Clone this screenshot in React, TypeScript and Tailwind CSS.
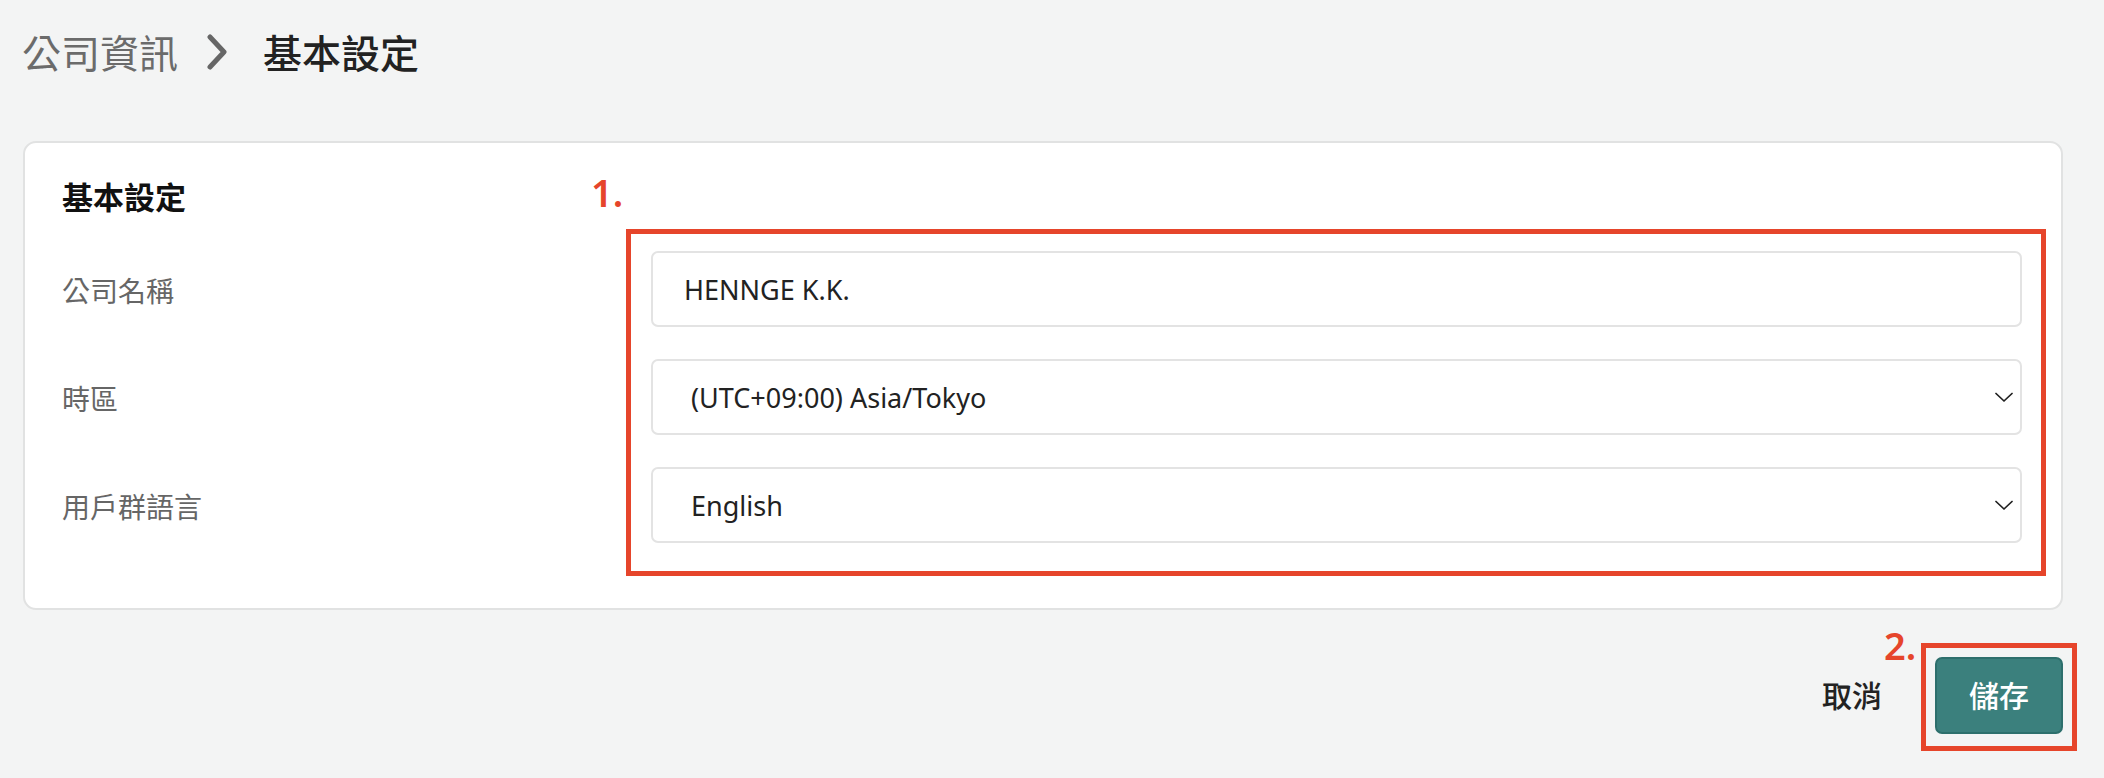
import React from "react";

function Chevron() {
  return (
    <svg width="18" height="11" viewBox="0 0 18 11" fill="none" className="shrink-0">
      <path d="M1 1.5 L9 9 L17 1.5" stroke="#1f1f1f" strokeWidth="1.7" strokeLinecap="round" strokeLinejoin="round" />
    </svg>
  );
}

function SelectBox({ value }: { value: string }) {
  return (
    <div className="h-[76px] rounded-[7px] border-2 border-[#e3e3e3] bg-white flex items-center justify-between pl-[38px] pr-[7px]">
      <span className="text-[27px] leading-none text-[#222]">{value}</span>
      <Chevron />
    </div>
  );
}

export default function App() {
  return (
    <div className="min-h-screen w-full bg-[#f3f4f4] font-[family-name:'Noto_Sans','Noto_Sans_CJK_TC',sans-serif]">
      <div className="ml-[22px] w-[2041px]">
        {/* Breadcrumb */}
        <div className="h-[104px] flex items-center">
          <span className="text-[39px] leading-none text-[#6b6b6b]">公司資訊</span>
          <svg width="22" height="36" viewBox="0 0 22 36" fill="none" className="ml-[28px]">
            <path d="M4 3 L18 18 L4 33" stroke="#666" strokeWidth="5" strokeLinecap="round" strokeLinejoin="round" />
          </svg>
          <span className="ml-[35px] text-[39px] leading-none font-medium text-[#222]">基本設定</span>
        </div>

        {/* Card */}
        <div className="mt-[37px] ml-[1px] w-[2040px] rounded-[13px] border-2 border-[#e1e2e2] bg-white pl-[37px] pr-[15px] pt-[34px] pb-[32px]">
          <div className="h-[40px] flex items-center text-[31px] leading-none font-bold text-[#111]">基本設定</div>
          <div className="mt-[12px] flex">
            <div className="w-[564px] shrink-0 flex flex-col pt-[24px] gap-[32px]">
              <div className="h-[76px] flex items-center text-[28px] leading-none text-[#666]">公司名稱</div>
              <div className="h-[76px] flex items-center text-[28px] leading-none text-[#666]">時區</div>
              <div className="h-[76px] flex items-center text-[28px] leading-none text-[#666]">用戶群語言</div>
            </div>
            <div className="relative flex-1 border-[5px] border-[#e6452b] pt-[17px] pb-[28px] pl-[20px] pr-[19px] flex flex-col gap-[32px]">
              <span className="absolute left-[-40px] top-[-61px] text-[38px] leading-none font-semibold text-[#e6452b]">1.</span>
              <div className="h-[76px] rounded-[7px] border-2 border-[#e3e3e3] bg-white flex items-center pl-[31px]">
                <span className="text-[27px] leading-none text-[#222]">HENNGE K.K.</span>
              </div>
              <SelectBox value="(UTC+09:00) Asia/Tokyo" />
              <SelectBox value="English" />
            </div>
          </div>
        </div>

        {/* Actions */}
        <div className="mt-[47px] ml-[1px] w-[2040px] flex justify-end items-center gap-[53px]">
          <span className="text-[30px] leading-none font-medium text-[#222]">取消</span>
          <div className="relative">
            <span className="absolute left-[-51px] top-[-31px] text-[38px] leading-none font-semibold text-[#e6452b]">2.</span>
            <div className="absolute left-[-14px] right-[-14px] top-[-14px] bottom-[-17px] border-[5px] border-[#e6452b]" />
            <button className="relative w-[128px] h-[77px] rounded-[7px] bg-[#3b807d] border-2 border-[#2d6f6c] text-white text-[30px] leading-none font-medium flex items-center justify-center">
              儲存
            </button>
          </div>
        </div>
      </div>
    </div>
  );
}
